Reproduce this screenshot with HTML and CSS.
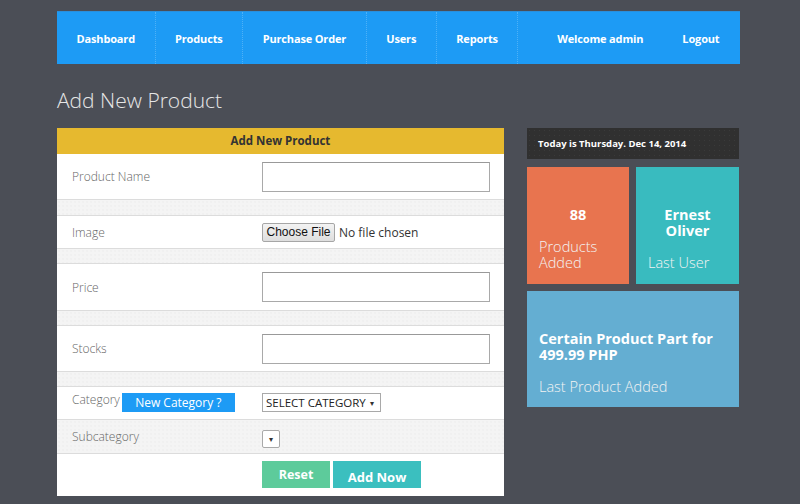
FILE: index.html
```html
<!DOCTYPE html>
<html>
<head>
<meta charset="utf-8">
<link rel="stylesheet" href="styles.css">
</head>
<body>
<div class="wrap">
  <nav class="nav">
    <a class="nav-item sep">Dashboard</a>
    <a class="nav-item sep">Products</a>
    <a class="nav-item sep">Purchase Order</a>
    <a class="nav-item sep">Users</a>
    <a class="nav-item sep">Reports</a>
    <div class="nav-right">
      <a class="nav-item">Welcome admin</a>
      <a class="nav-item">Logout</a>
    </div>
  </nav>

  <h1 class="page-title">Add New Product</h1>

  <div class="main">
    <div class="panel">
      <div class="panel-head">Add New Product</div>
      <div class="row row-name">
        <div class="label">Product Name</div>
        <div class="field"><div class="text-input"></div></div>
      </div>
      <div class="row band band-16"></div>
      <div class="row row-image">
        <div class="label">Image</div>
        <div class="field file">
          <span class="file-btn">Choose File</span>
          <span class="file-txt">No file chosen</span>
        </div>
      </div>
      <div class="row band"></div>
      <div class="row row-price">
        <div class="label">Price</div>
        <div class="field"><div class="text-input"></div></div>
      </div>
      <div class="row band"></div>
      <div class="row row-stocks">
        <div class="label">Stocks</div>
        <div class="field"><div class="text-input"></div></div>
      </div>
      <div class="row band"></div>
      <div class="row row-cat">
        <div class="label label-cat">Category <span class="new-cat">New Category ?</span></div>
        <div class="field field-cat"><span class="select">SELECT CATEGORY <span class="caret">&#9662;</span></span></div>
      </div>
      <div class="row row-sub band">
        <div class="label">Subcategory</div>
        <div class="field"><span class="select select-empty"><span class="caret">&#9662;</span></span></div>
      </div>
      <div class="row row-btns">
        <div class="label"></div>
        <div class="field btns">
          <span class="btn btn-reset">Reset</span>
          <span class="btn btn-add">Add Now</span>
        </div>
      </div>
    </div>

    <aside class="side">
      <div class="date-bar">Today is Thursday. Dec 14, 2014</div>
      <div class="tiles">
        <div class="tile tile-orange">
          <div class="tile-title center">88</div>
          <div class="tile-label">Products<br>Added</div>
        </div>
        <div class="tile tile-teal">
          <div class="tile-title center">Ernest<br>Oliver</div>
          <div class="tile-label">Last User</div>
        </div>
      </div>
      <div class="tile tile-blue">
        <div class="tile-title">Certain Product Part for<br>499.99 PHP</div>
        <div class="tile-label">Last Product Added</div>
      </div>
    </aside>
  </div>
</div>
</body>
</html>
```

FILE: styles.css
```css
* { box-sizing: border-box; }
html, body { margin: 0; padding: 0; }
body {
  background: #4b4e56;
  font-family: "Open Sans", "Liberation Sans", sans-serif;
  width: 800px;
  height: 504px;
  overflow: hidden;
}
.wrap {
  padding: 11px 60px 0 57px;
}
.nav {
  display: flex;
  align-items: stretch;
  height: 53px;
  background: #1d9bf5;
  border-top: 1px solid #2a8fdc;
}
.nav-item {
  display: flex;
  align-items: center;
  padding: 0 19.5px;
  color: #fff;
  font-weight: 700;
  font-size: 11px;
  letter-spacing: -0.15px;
  white-space: nowrap;
}
.nav-item.sep {
  border-right: 1px dotted rgba(255,255,255,0.22);
}
.nav-right {
  margin-left: auto;
  display: flex;
  padding-right: 1px;
}
.page-title {
  margin: 24px 0 0 0;
  height: 40px;
  font-weight: 300;
  font-size: 21px;
  color: #e6e6e6;
  line-height: 24px;
}
.main {
  display: flex;
  gap: 23px;
  align-items: flex-start;
}
.panel {
  width: 447px;
  background: #fff;
}
.panel-head {
  height: 26px;
  background: #e6b92f;
  color: #333;
  font-weight: 700;
  font-size: 11.5px;
  text-align: center;
  line-height: 26px;
}
.row {
  display: flex;
  align-items: center;
  border-top: 1px solid #dcdcdc;
}
.band {
  height: 15px;
  background-color: #f4f4f4;
  background-image: radial-gradient(#ebebeb 0.6px, transparent 0.8px);
  background-size: 4px 4px;
}
.band-16 { height: 16px; }
.row-name { height: 45px; border-top: 0; }
.row-image { height: 33px; }
.row-price { height: 47px; }
.row-stocks { height: 46px; }
.row-cat { height: 33px; align-items: flex-start; }
.row-sub { height: 34px; }
.row-btns { height: 43px; align-items: flex-start; }
.label {
  width: 205px;
  padding-left: 15px;
  font-size: 12px;
  font-weight: 300;
  color: #666;
}
.field {
  flex: 1;
  padding-right: 14px;
}
.text-input {
  height: 30px;
  width: 228px;
  border: 1px solid #a9a9a9;
  border-top-color: #999;
  background: #fff;
}
.file {
  display: flex;
  align-items: center;
}
.file-btn {
  display: inline-block;
  height: 19px;
  width: 73px;
  line-height: 17px;
  text-align: center;
  font-family: "Liberation Sans", Arial, sans-serif;
  font-size: 12px;
  color: #111;
  background: linear-gradient(#f3f3f3, #dedede);
  border: 1px solid #a6a6a6;
  border-radius: 2px;
}
.file-txt {
  margin-left: 4px;
  font-size: 12px;
  color: #333;
}
.label-cat {
  display: flex;
  align-items: flex-start;
  padding-top: 4px;
}
.new-cat {
  display: inline-block;
  margin-left: 2px;
  margin-top: 2px;
  width: 113px;
  height: 19px;
  line-height: 19px;
  text-align: center;
  background: #1d9bf5;
  color: #fff;
  font-weight: 400;
  font-size: 12px;
}
.field-cat {
  display: flex;
  padding-top: 6px;
}
.select {
  display: inline-flex;
  align-items: center;
  height: 19px;
  padding: 0 4px 0 3px;
  border: 1px solid #a9a9a9;
  background: #fff;
  font-size: 11.5px;
  color: #222;
  width: 119px;
  white-space: nowrap;
}
.caret {
  font-size: 8px;
  margin-left: 4px;
  color: #333;
}
.select-empty {
  width: 18px;
  height: 18px;
  border-radius: 2px;
  padding: 0;
  justify-content: center;
}
.select-empty .caret { margin-left: 0; }
.btns {
  display: flex;
  gap: 3px;
  padding-top: 7px;
}
.btn {
  display: inline-block;
  height: 27px;
  color: #fff;
  font-weight: 700;
  text-align: center;
}
.btn-reset {
  width: 68px;
  background: #5dcb9b;
  font-size: 12.5px;
  line-height: 27px;
}
.btn-add {
  width: 88px;
  background: #3bbfbf;
  font-size: 13px;
  line-height: 32px;
}
.side {
  width: 212px;
  display: flex;
  flex-direction: column;
  gap: 7px;
}
.date-bar {
  height: 31px;
  background-color: #303030;
  background-image: radial-gradient(#3a3a3a 0.6px, transparent 0.8px);
  background-size: 5px 5px;
  color: #fff;
  font-size: 9.5px;
  font-weight: 700;
  line-height: 31px;
  padding-left: 11px;
  margin-bottom: 1px;
}
.tiles {
  display: flex;
  gap: 7px;
}
.tile {
  display: flex;
  flex-direction: column;
  padding: 40px 12px 14px 12px;
  color: #fff;
}
.tile-orange {
  width: 102px;
  height: 117px;
  background: #e8744f;
}
.tile-teal {
  width: 103px;
  height: 117px;
  background: #39bbbf;
}
.tile-blue {
  height: 116px;
  background: #64aed2;
  padding-bottom: 13px;
}
.tile-title {
  font-weight: 700;
  font-size: 14.5px;
  line-height: 15.5px;
}
.tile-title.center { text-align: center; }
.tile-label {
  margin-top: auto;
  font-weight: 300;
  font-size: 14.5px;
  line-height: 15.5px;
  color: #f3f3f3;
}
```
